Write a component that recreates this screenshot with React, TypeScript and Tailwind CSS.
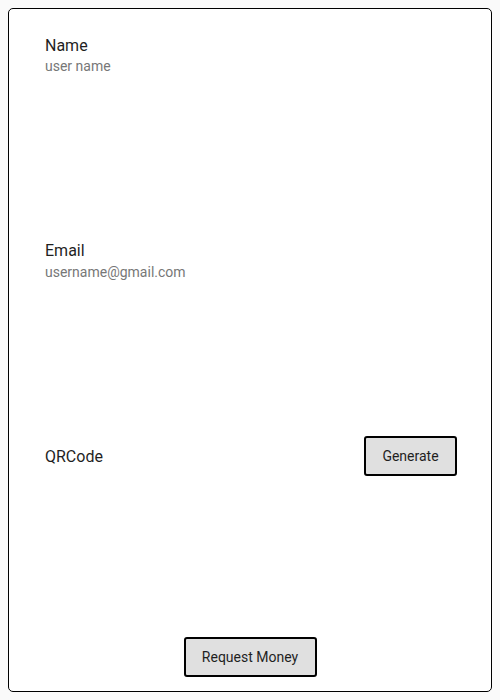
import React from "react";

export default function App() {
  return (
    <div className="w-[500px] h-[700px] bg-[#fafafa] p-2" style={{ fontFamily: "Roboto, 'Liberation Sans', sans-serif" }}>
      <div className="h-full border border-black rounded-[5px] bg-white flex flex-col pl-[36px] pr-[34px]">
        <div className="mt-[25px] flex flex-col">
          <div className="text-[16px] leading-6 text-[#1f1f1f]">Name</div>
          <div className="-mt-[2px] text-[14px] leading-5 text-[#777777]">user name</div>
        </div>
        <div className="mt-[163px] flex flex-col">
          <div className="text-[16px] leading-6 text-[#1f1f1f]">Email</div>
          <div className="-mt-[1px] text-[14px] leading-5 text-[#777777]">username@gmail.com</div>
        </div>
        <div className="mt-[154px] flex items-center justify-between">
          <div className="mt-[2px] text-[16px] leading-6 text-[#1f1f1f]">QRCode</div>
          <button className="w-[93px] h-[40px] border-2 border-black rounded-[3px] bg-[#e0e0e0] text-[14px] text-[#1f1f1f]">
            Generate
          </button>
        </div>
        <div className="flex-1" />
        <div className="flex justify-center mb-[14px] pr-[2px]">
          <button className="w-[133px] h-[40px] border-2 border-black rounded-[3px] bg-[#e0e0e0] text-[14px] text-[#1f1f1f]">
            Request Money
          </button>
        </div>
      </div>
    </div>
  );
}
